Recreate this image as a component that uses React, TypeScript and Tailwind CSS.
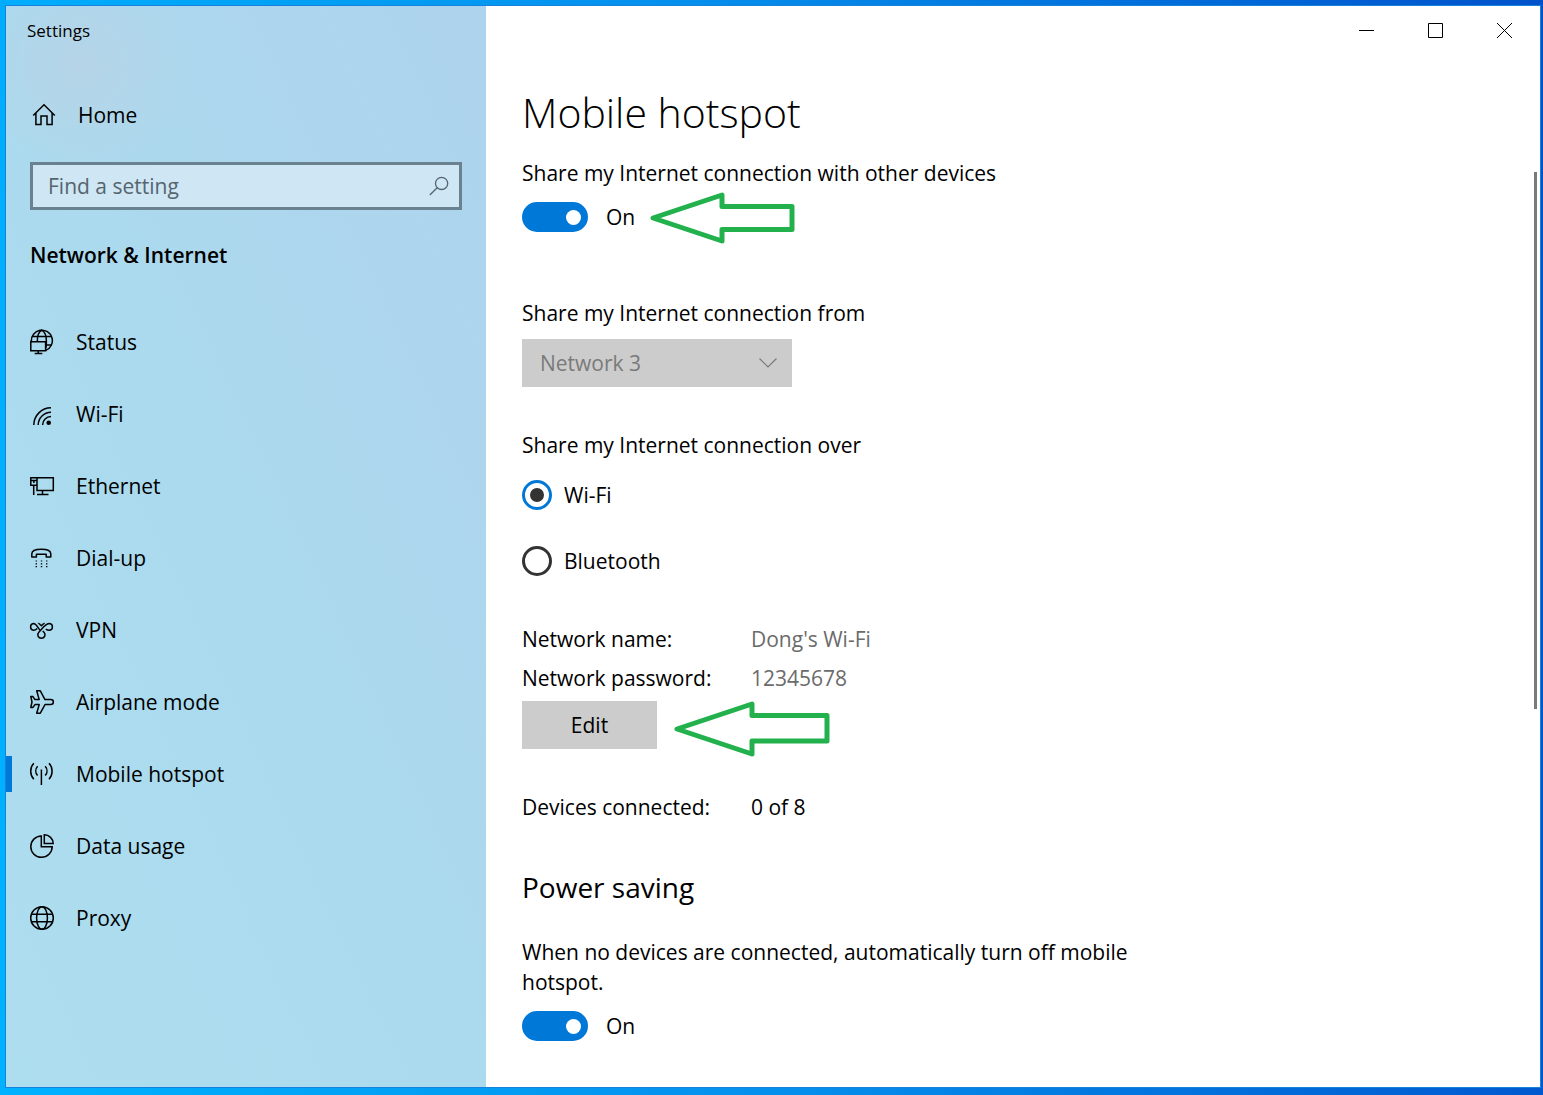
import { useState } from 'react';
import type { ReactNode } from 'react';

type IconProps = { children: ReactNode };

/** Line icon on a 26px grid, shared by the whole sidebar */
function LineIcon({ children }: IconProps) {
  return (
    <svg
      width="26"
      height="26"
      viewBox="0 0 26 26"
      fill="none"
      stroke="currentColor"
      strokeWidth="1.5"
      className="shrink-0"
      aria-hidden="true"
    >
      {children}
    </svg>
  );
}

const NAV_ITEMS: { label: string; icon: ReactNode }[] = [
  {
    label: 'Status',
    icon: (
      <>
        <path d="M2.4 12.5A10.5 10.5 0 1 1 16.8 21.4" />
        <path d="M3.6 7.5H22M17 16H22.4M8.3 12.5C8.3 7.5 10 2.5 12.8 1.2C15.8 3 17.4 7.5 17.4 12C17.4 15 17.2 17 16.8 19" />
        <path d="M1.8 12.8H16.6V21.8H1.8ZM9.3 21.8V24.3M5.7 24.5H13.3" />
      </>
    ),
  },
  {
    label: 'Wi-Fi',
    icon: (
      <>
        <path d="M4.8 24A17.3 17.3 0 0 1 22 6.8M9.2 24A12.9 12.9 0 0 1 22 11.2M13.6 24A8.5 8.5 0 0 1 22 15.6" />
        <circle cx="19.7" cy="21.8" r="2.3" fill="currentColor" stroke="none" />
      </>
    ),
  },
  {
    label: 'Ethernet',
    icon: (
      <>
        <path d="M8 4.8H24.3V17.5H8ZM1.8 4.8H8V12.2H1.8ZM4.7 12.2V22M13.5 17.5V21.5M8 21.5H19.5" />
        <path d="M2 7.5H8M4.9 7.5V10" />
      </>
    ),
  },
  {
    label: 'Dial-up',
    icon: (
      <>
        <path d="M2.8 9C2.8 5.5 7 4.3 12.3 4.3S21.8 5.5 21.8 9V12H17.2V9.3H7.4V12H2.8Z" strokeLinejoin="round" />
        <path d="M6.6 16H18.4M6.6 18.8H18.4M6.6 21.7H18.4" strokeWidth="1.2" strokeDasharray="1.4 3.8" />
      </>
    ),
  },
  {
    label: 'VPN',
    icon: (
      <>
        {/* Right and bottom loops share one strand, the left loop runs under it */}
        <path d="M16.8 12.2C17.8 13 19 13.3 20.6 13.3A3.4 3.4 0 0 0 20.6 6.6C16.5 6.6 14.5 10.5 9.8 15.3C7.6 17.6 9.2 21.2 12.4 21.2C15.6 21.2 17.2 17.6 15 15.3L13.7 13.9" />
        <path d="M11 13.1C8.5 10.7 7.5 6.6 4.4 6.6A3.4 3.4 0 0 0 4.4 13.3C6 13.3 7.2 12.6 8.2 11.5" />
        <path d="M8.8 6.2H10.6L12.4 8L14.2 6.2H16L12.4 9.6Z" fill="currentColor" strokeWidth="0.4" />
      </>
    ),
  },
  {
    label: 'Airplane mode',
    icon: (
      <path
        d="M16 10.6L11.3 1.8H7.7L10.2 10.6H6L3.8 7.5H1.8L3 13L1.8 18.5H3.8L6 15.6H10.2L7.7 24.2H11.3L16 15.6H21.8C25.2 15.6 25.2 10.6 21.8 10.6Z"
        strokeLinejoin="round"
      />
    ),
  },
  {
    label: 'Mobile hotspot',
    icon: (
      <path d="M12.4 8.5V24M4.8 2.3C.7 6.5.7 14 4.8 18.2M8.6 5.3C6.2 8 6.2 11.8 8.6 14.6M20 2.3C24.1 6.5 24.1 14 20 18.2M16.2 5.3C18.6 8 18.6 11.8 16.2 14.6" />
    ),
  },
  {
    label: 'Data usage',
    icon: <path d="M12.3 2.9A10.7 10.7 0 1 0 23.2 13.8H12.3ZM15.3 1.8V10.6H24.2A8.9 8.9 0 0 0 15.3 1.8Z" />,
  },
  {
    label: 'Proxy',
    icon: (
      <>
        <circle cx="13" cy="13" r="11.3" />
        <ellipse cx="13" cy="13" rx="5.4" ry="11.3" />
        <path d="M2.3 9.3H23.7M2.3 16.8H23.7" />
      </>
    ),
  },
];

/** Hand-drawn marker arrow pointing left */
function GreenArrow({ className, points, viewBox }: { className: string; points: string; viewBox: string }) {
  return (
    <svg
      className={`shrink-0 ${className}`}
      viewBox={viewBox}
      fill="none"
      stroke="#22b14c"
      strokeWidth="5"
      strokeLinejoin="round"
      aria-hidden="true"
    >
      <polygon points={points} />
    </svg>
  );
}

function Toggle({ id, label }: { id: string; label: string }) {
  const [on, setOn] = useState(true);

  return (
    <>
      <input
        id={id}
        type="checkbox"
        role="switch"
        aria-label={label}
        checked={on}
        onChange={() => setOn(!on)}
        className="flex h-[30px] w-[66px] shrink-0 appearance-none items-center rounded-full bg-[#767676] px-[7px] before:size-[15px] before:rounded-full before:bg-white checked:justify-end checked:bg-[#0078d7]"
      />
      <label htmlFor={id} className="w-8">
        {on ? 'On' : 'Off'}
      </label>
    </>
  );
}

function Sidebar() {
  const [active, setActive] = useState('Mobile hotspot');

  return (
    <aside className="w-[480px] shrink-0 bg-[radial-gradient(circle_at_75px_60px,#b6d4e7_0,#b6d4e700_110px),linear-gradient(65deg,#addeef_0%,#abdaee_45%,#aed3ed_100%)] pt-px">
      <div className="flex h-12 items-center pl-[21px] text-[17px]">Settings</div>

      <a href="#home" className="mt-6 flex h-[72px] items-center gap-[21px] pl-[25px]">
        <LineIcon>
          <path d="M2.2 13.5L13 2.8L23.8 13.5M4.9 11V22.5H10V14H16V22.5H21.1V11" />
        </LineIcon>
        Home
      </a>

      <div className="mx-6 mt-[11px] flex h-12 items-center border-[3px] border-[#6a8290] bg-[#cfe6f4] pr-2.5">
        <input
          type="text"
          aria-label="Find a setting"
          placeholder="Find a setting"
          className="min-w-0 flex-1 bg-transparent pl-[15px] outline-none placeholder:text-[#55646d]"
        />
        <svg width="20" height="20" viewBox="0 0 20 20" fill="none" stroke="#55646d" strokeWidth="1.3" aria-hidden="true">
          <circle cx="12.6" cy="7.4" r="6.1" />
          <path d="M8.2 11.8L.8 19" />
        </svg>
      </div>

      <h2 className="mt-[30px] pl-6 text-[21px] leading-[30px] font-semibold">Network &amp; Internet</h2>

      <nav className="mt-9">
        {NAV_ITEMS.map(({ label, icon }) => (
          <a
            key={label}
            href={`#${label}`}
            onClick={() => setActive(label)}
            aria-current={active === label ? 'page' : undefined}
            className="flex h-[72px] items-center"
          >
            <span className={`h-9 w-[6px] ${active === label ? 'bg-[#0078d7]' : ''}`} />
            <span className="mr-[21px] ml-[17px]">
              <LineIcon>{icon}</LineIcon>
            </span>
            {label}
          </a>
        ))}
      </nav>
    </aside>
  );
}

function WindowControls() {
  return (
    <header className="flex h-12 justify-end pr-px">
      <button type="button" aria-label="Minimize" className="flex w-[69px] items-center justify-center">
        <svg width="15" height="15" viewBox="0 0 15 15" stroke="#000" fill="none">
          <path d="M0 7.5H15" />
        </svg>
      </button>
      <button type="button" aria-label="Maximize" className="flex w-[69px] items-center justify-center">
        <svg width="15" height="15" viewBox="0 0 15 15" stroke="#000" fill="none">
          <path d="M.5 .5H14.5V14.5H.5Z" />
        </svg>
      </button>
      <button type="button" aria-label="Close" className="flex w-[69px] items-center justify-center">
        <svg width="15" height="15" viewBox="0 0 15 15" stroke="#000" fill="none">
          <path d="M0 0L15 15M15 0L0 15" />
        </svg>
      </button>
    </header>
  );
}

const CONNECTION_TYPES = ['Wi-Fi', 'Bluetooth'];

function HotspotSettings() {
  const [over, setOver] = useState('Wi-Fi');

  return (
    <main className="min-w-0 flex-1 pt-[30px] pr-4 pb-11 pl-9">
      <h1 className="text-[41px] leading-[56px] font-light">Mobile hotspot</h1>

      <p className="mt-[18px]">Share my Internet connection with other devices</p>
      <div className="mt-3.5 flex h-[30px] items-center gap-[18px]">
        <Toggle id="share" label="Share my Internet connection with other devices" />
        <GreenArrow
          className="-mt-2.5 -mb-3 -ml-[7px] h-[54px] w-[146px]"
          viewBox="0 0 146 54"
          points="4,27 73,4 73,15.5 143,15.5 143,38.5 73,38.5 73,50"
        />
      </div>

      <label htmlFor="network" className="mt-[66px] block">
        Share my Internet connection from
      </label>
      <div className="mt-[11px] grid h-12 w-[270px] items-center bg-[#ccc] text-[#7a7a7a]">
        <select
          id="network"
          disabled
          className="col-start-1 row-start-1 h-full w-full appearance-none pl-[18px] opacity-100"
        >
          <option>Network 3</option>
        </select>
        <svg
          className="col-start-1 row-start-1 mr-[15px] justify-self-end"
          width="18"
          height="10"
          viewBox="0 0 18 10"
          fill="none"
          stroke="currentColor"
          strokeWidth="1.2"
          aria-hidden="true"
        >
          <path d="M.5 .5L9 9L17.5 .5" />
        </svg>
      </div>

      <fieldset className="mt-[43px]">
        <legend>Share my Internet connection over</legend>
        <div className="mt-5 flex flex-col gap-9">
          {CONNECTION_TYPES.map((type) => (
            <label key={type} className="flex items-center gap-3">
              <input
                type="radio"
                name="over"
                checked={over === type}
                onChange={() => setOver(type)}
                className="flex size-[30px] appearance-none items-center justify-center rounded-full border-[3px] border-[#333] before:size-3.5 before:rounded-full checked:border-[#0078d7] checked:before:bg-[#333]"
              />
              {type}
            </label>
          ))}
        </div>
      </fieldset>

      <dl className="mt-12 grid grid-cols-[229px_1fr] gap-y-[9px]">
        <dt>Network name:</dt>
        <dd className="text-[#6b6b6b]">Dong's Wi-Fi</dd>
        <dt>Network password:</dt>
        <dd className="text-[#6b6b6b]">12345678</dd>
      </dl>
      <div className="mt-2 flex h-12 items-center gap-4">
        <button type="button" className="h-12 w-[135px] bg-[#ccc]">
          Edit
        </button>
        <GreenArrow
          className="-mb-2 h-[58px] w-[158px]"
          viewBox="0 0 158 58"
          points="4,29 79,4 79,15.5 154,15.5 154,41 79,41 79,54"
        />
      </div>

      <dl className="mt-[43px] grid grid-cols-[229px_1fr]">
        <dt>Devices connected:</dt>
        <dd>0 of 8</dd>
      </dl>

      <h2 className="mt-[45px] text-[28px] leading-10">Power saving</h2>
      <p className="mt-[30px] max-w-[640px]">
        When no devices are connected, automatically turn off mobile hotspot.
      </p>
      <div className="mt-3.5 flex h-[30px] items-center gap-[18px]">
        <Toggle id="power-saving" label="When no devices are connected, automatically turn off mobile hotspot." />
      </div>
    </main>
  );
}

export default function App() {
  return (
    <div className="flex min-h-screen bg-[linear-gradient(85deg,#00b2ff_0%,#058deb_50%,#0052cb_100%)] pt-[6px] pr-[3px] pb-2 pl-[6px] font-['Open_Sans','Noto_Sans',sans-serif] text-[21px] leading-[30px] text-black">
      <div className="flex flex-1 outline outline-[#1583dc]">
        <Sidebar />
        <div className="flex min-w-0 flex-1 flex-col bg-white">
          <WindowControls />
          <div className="flex flex-1">
            <HotspotSettings />
            {/* Scrollbar thumb */}
            <div className="mt-[118px] mr-[3px] h-[537px] w-[3px] shrink-0 bg-[#7a7a7a]" />
          </div>
        </div>
      </div>
    </div>
  );
}
